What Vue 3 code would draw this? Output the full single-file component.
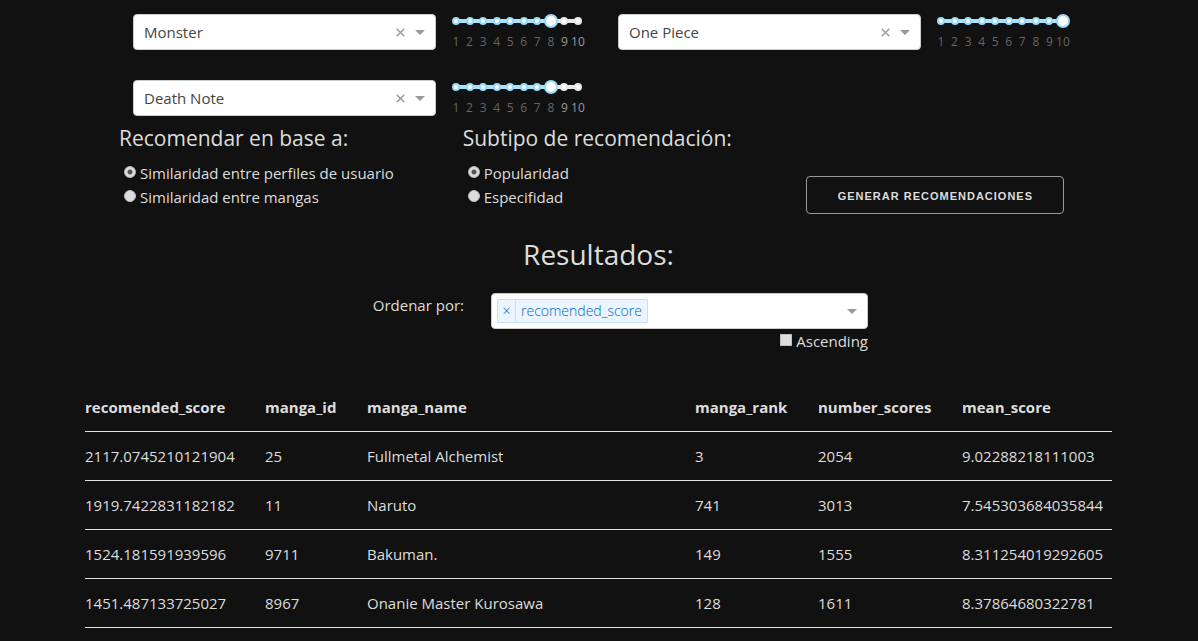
<script setup>
import { ref } from 'vue'

const titles = ['Monster', 'One Piece', 'Death Note']

const picks = ref([
  { id: 1, title: 'Monster', score: 8 },
  { id: 2, title: 'One Piece', score: 10 },
  { id: 3, title: 'Death Note', score: 8 }
])

const groups = [
  {
    name: 'base',
    legend: 'Recomendar en base a:',
    options: ['Similaridad entre perfiles de usuario', 'Similaridad entre mangas']
  },
  {
    name: 'subtype',
    legend: 'Subtipo de recomendación:',
    options: ['Popularidad', 'Especifidad']
  }
]

const chosen = ref({ base: groups[0].options[0], subtype: groups[1].options[0] })
const sortBy = ref(['recomended_score'])
const ascending = ref(false)

const columns = ['recomended_score', 'manga_id', 'manga_name', 'manga_rank', 'number_scores', 'mean_score']
const rows = [
  ['2117.0745210121904', '25', 'Fullmetal Alchemist', '3', '2054', '9.02288218111003'],
  ['1919.7422831182182', '11', 'Naruto', '741', '3013', '7.545303684035844'],
  ['1524.181591939596', '9711', 'Bakuman.', '149', '1555', '8.311254019292605'],
  ['1451.487133725027', '8967', 'Onanie Master Kurosawa', '128', '1611', '8.37864680322781']
]
</script>

<template>
  <main class="page">
    <section class="picks">
      <div v-for="pick in picks" :key="pick.id" class="pick">
        <div class="control">
          <select v-model="pick.title" class="choice" :aria-label="'Manga ' + pick.id">
            <option v-for="title in titles" :key="title">{{ title }}</option>
          </select>
          <button class="clear" type="button" aria-label="Quitar" @click="pick.title = ''">
            <svg width="9" height="9" viewBox="0 0 9 9"><path d="M0.7 0.7 8.3 8.3M8.3 0.7 0.7 8.3" /></svg>
          </button>
          <svg class="arrow" width="10" height="5" viewBox="0 0 10 5"><path d="M0 0h10L5 5z" /></svg>
        </div>
        <div class="slider">
          <div class="rail">
            <div class="track" :style="{ width: ((pick.score - 1) / 9) * 100 + '%' }"></div>
            <div class="dots">
              <span v-for="n in 10" :key="n" class="slot">
                <span class="dot" :class="{ on: n <= pick.score }"></span>
              </span>
            </div>
          </div>
          <input
            v-model.number="pick.score"
            class="range"
            type="range"
            min="1"
            max="10"
            :aria-label="'Puntaje de ' + pick.title"
          />
          <div class="marks">
            <span v-for="n in 10" :key="n" class="slot" :class="{ past: n <= pick.score }">{{ n }}</span>
          </div>
        </div>
      </div>
    </section>

    <section class="options">
      <fieldset v-for="group in groups" :key="group.name" class="group">
        <legend class="legend">{{ group.legend }}</legend>
        <label v-for="option in group.options" :key="option" class="option">
          <input v-model="chosen[group.name]" class="radio" type="radio" :name="group.name" :value="option" />
          <span>{{ option }}</span>
        </label>
      </fieldset>
      <button class="generate" type="button">Generar recomendaciones</button>
    </section>

    <h1 class="title">Resultados:</h1>

    <section class="sorting">
      <label class="sort-label" for="sort">Ordenar por:</label>
      <div class="sort-field">
        <div class="control">
          <div v-for="key in sortBy" :key="key" class="tag">
            <button class="remove" type="button" :aria-label="'Quitar ' + key" @click="sortBy = []">×</button>
            <span class="tag-text">{{ key }}</span>
          </div>
          <input id="sort" class="search" type="text" />
          <svg class="arrow" width="10" height="5" viewBox="0 0 10 5"><path d="M0 0h10L5 5z" /></svg>
        </div>
        <label class="ascending">
          <input v-model="ascending" class="check" type="checkbox" />
          <span>Ascending</span>
        </label>
      </div>
    </section>

    <table class="results">
      <colgroup>
        <col v-for="column in columns" :key="column" :class="column" />
      </colgroup>
      <thead>
        <tr>
          <th v-for="column in columns" :key="column" scope="col">{{ column }}</th>
        </tr>
      </thead>
      <tbody>
        <tr v-for="row in rows" :key="row[1]">
          <td v-for="(cell, i) in row" :key="i">{{ cell }}</td>
        </tr>
      </tbody>
    </table>
  </main>
</template>

<style>
body {
  background: #111;
}
</style>

<style scoped>
* {
  box-sizing: border-box;
}

.page {
  padding: 14px 86px 13px 85px;
  color: #ddd;
  font-family: 'Open Sans', 'Noto Sans', sans-serif;
  font-size: 15px;
  line-height: 24px;
}

input,
select,
button {
  margin: 0;
  padding: 0;
  border: 0;
  background: none;
  color: inherit;
  font: inherit;
}

.picks {
  display: grid;
  grid-template-columns: 1fr 1fr;
  gap: 30px 33px;
  padding: 0 42px 0 48px;
}

.pick {
  display: grid;
  grid-template-columns: 1fr 136px;
  gap: 13px;
}

.control {
  display: flex;
  align-items: center;
  height: 36px;
  padding: 0 10px 0 5px;
  border: 1px solid #ccc;
  border-radius: 4px;
  background: #fff;
  color: #444;
}

.choice {
  flex: 1;
  min-width: 0;
  height: 34px;
  padding-left: 5px;
  appearance: none;
}

.clear {
  display: flex;
  margin-right: 10px;
}

.clear path {
  stroke: #999;
  stroke-width: 1.4;
}

.arrow path {
  fill: #999;
}

.slider {
  position: relative;
}

.rail {
  height: 4px;
  margin: 5px 7px 0;
  border-radius: 2px;
  background: #e9e9e9;
}

.track {
  height: 4px;
  border-radius: 2px;
  background: #abe2fb;
}

.dots,
.marks {
  display: flex;
  justify-content: space-between;
}

.dots {
  margin-top: -6px;
}

.slot {
  display: flex;
  justify-content: center;
  width: 0;
}

.dot {
  flex: none;
  width: 8px;
  height: 8px;
  border: 2px solid #e9e9e9;
  border-radius: 50%;
  background: #fff;
}

.dot.on {
  border-color: #96dbfa;
}

.range {
  position: absolute;
  top: 0;
  left: 0;
  width: 100%;
  height: 14px;
  appearance: none;
}

.range::-webkit-slider-thumb {
  width: 14px;
  height: 14px;
  border: 2px solid #96dbfa;
  border-radius: 50%;
  background: #fff;
  appearance: none;
}

.marks {
  margin: 11px 7px 0;
  color: #999;
  font-size: 12px;
  line-height: 16px;
}

.past {
  color: #666;
}

.options {
  display: grid;
  grid-template-columns: repeat(3, 1fr);
  gap: 40px;
  padding: 7px 2px 0 34px;
}

.group {
  min-width: 0;
  margin: 0;
  padding: 0;
  border: 0;
}

.legend {
  padding: 0;
  margin-bottom: 8px;
  font-size: 21px;
  line-height: 30px;
  white-space: nowrap;
}

.option {
  display: flex;
  gap: 4px;
  padding-left: 5px;
}

.radio {
  width: 12px;
  height: 12px;
  margin-top: 5px;
  border: 1px solid #bbb;
  border-radius: 50%;
  background: #ddd;
  appearance: none;
}

.radio:checked {
  background: radial-gradient(circle, #555 0 2px, #ddd 3px);
}

.generate {
  align-self: end;
  width: 85%;
  height: 38px;
  margin-bottom: -5px;
  padding-top: 2px;
  border: 1px solid #999;
  border-radius: 4px;
  font-family: 'Liberation Sans', Arial, sans-serif;
  font-size: 11px;
  font-weight: 600;
  letter-spacing: 1px;
  text-transform: uppercase;
  white-space: nowrap;
}

.title {
  margin: 24px 0 18px;
  font-size: 28px;
  font-weight: 400;
  line-height: 42px;
  text-align: center;
}

.sorting {
  display: grid;
  grid-template-columns: 379fr 377fr 217fr;
  column-gap: 27px;
}

.sort-label {
  text-align: right;
}

.tag {
  display: flex;
  border: 1px solid #c2e0ff;
  border-radius: 2px;
  background: #ebf5ff;
  color: #0066cc;
  font-size: 14px;
  font-weight: 300;
  line-height: 22px;
}

.remove {
  width: 18px;
  border-right: 1px solid #c2e0ff;
}

.tag-text {
  padding: 0 5px;
}

.search {
  flex: 1;
  min-width: 0;
}

.ascending {
  display: flex;
  gap: 4px;
  justify-content: flex-end;
}

.check {
  width: 12px;
  height: 12px;
  margin-top: 5px;
  border: 1px solid #bbb;
  background: #ddd;
  appearance: none;
}

.check:checked {
  background: #555;
}

.results {
  width: 100%;
  margin-top: 30px;
  border-collapse: collapse;
  table-layout: fixed;
}

.recomended_score,
.mean_score {
  width: 165px;
}

.manga_id {
  width: 102px;
}

.manga_rank {
  width: 123px;
}

.number_scores {
  width: 144px;
}

th,
td {
  padding: 12px 15px;
  border-bottom: 1px solid #e1e1e1;
  text-align: left;
  white-space: nowrap;
}

th:first-child,
td:first-child {
  padding-left: 0;
}

th:last-child,
td:last-child {
  padding-right: 0;
}
</style>
